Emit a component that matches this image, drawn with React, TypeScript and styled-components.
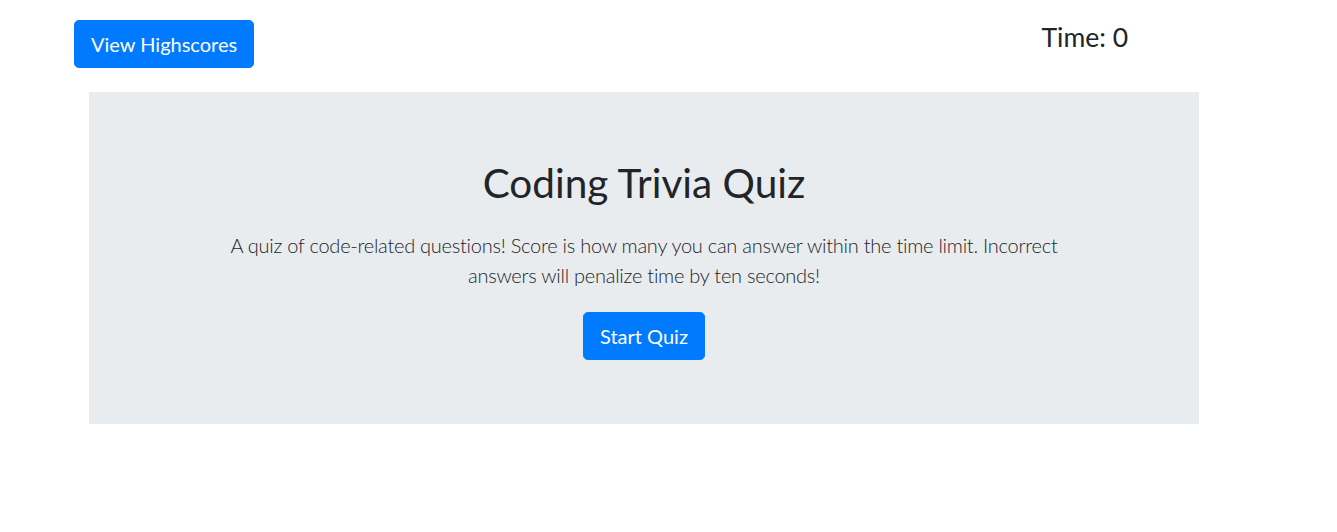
import React from "react";
import styled, { createGlobalStyle } from "styled-components";

const Global = createGlobalStyle`
  html, body { margin: 0; padding: 0; background: #fff; }
  body {
    font-family: Lato, "Noto Sans", "Liberation Sans", sans-serif;
    color: #212529;
    -webkit-font-smoothing: antialiased;
  }
`;

const Page = styled.div`
  display: flex;
  flex-direction: column;
  padding-top: 20px;
`;

const Header = styled.header`
  display: flex;
  justify-content: space-between;
  align-items: flex-start;
  margin-left: 74px;
  width: 1054px;
`;

const Button = styled.button`
  display: inline-block;
  background: #007bff;
  color: #fff;
  border: 1px solid #007bff;
  border-radius: 4.8px;
  font-family: inherit;
  font-size: 20px;
  line-height: 30px;
  font-weight: 400;
  padding: 8px 16px;
  cursor: pointer;
`;

const Timer = styled.h4`
  margin: 1px 0 0;
  font-size: 26.5px;
  line-height: 32px;
  font-weight: 400;
`;

const Jumbotron = styled.section`
  margin: 24px 0 0 89px;
  width: 1110px;
  box-sizing: border-box;
  background: #e9ecef;
  padding: 64px 32px;
  display: flex;
  flex-direction: column;
  align-items: center;
  text-align: center;
`;

const Title = styled.h1`
  margin: 3px 0 23px;
  font-size: 40.5px;
  line-height: 48px;
  font-weight: 400;
`;

const Lead = styled.p`
  margin: 0 0 22px;
  max-width: 840px;
  font-size: 20px;
  line-height: 30px;
  font-weight: 300;
  letter-spacing: -0.25px;
`;

export default function App() {
  return (
    <>
      <Global />
      <Page>
        <Header>
          <Button>View Highscores</Button>
          <Timer>Time: 0</Timer>
        </Header>
        <Jumbotron>
          <Title>Coding Trivia Quiz</Title>
          <Lead>
            A quiz of code-related questions! Score is how many you can answer within the time limit. Incorrect answers will penalize time by ten seconds!
          </Lead>
          <Button>Start Quiz</Button>
        </Jumbotron>
      </Page>
    </>
  );
}
